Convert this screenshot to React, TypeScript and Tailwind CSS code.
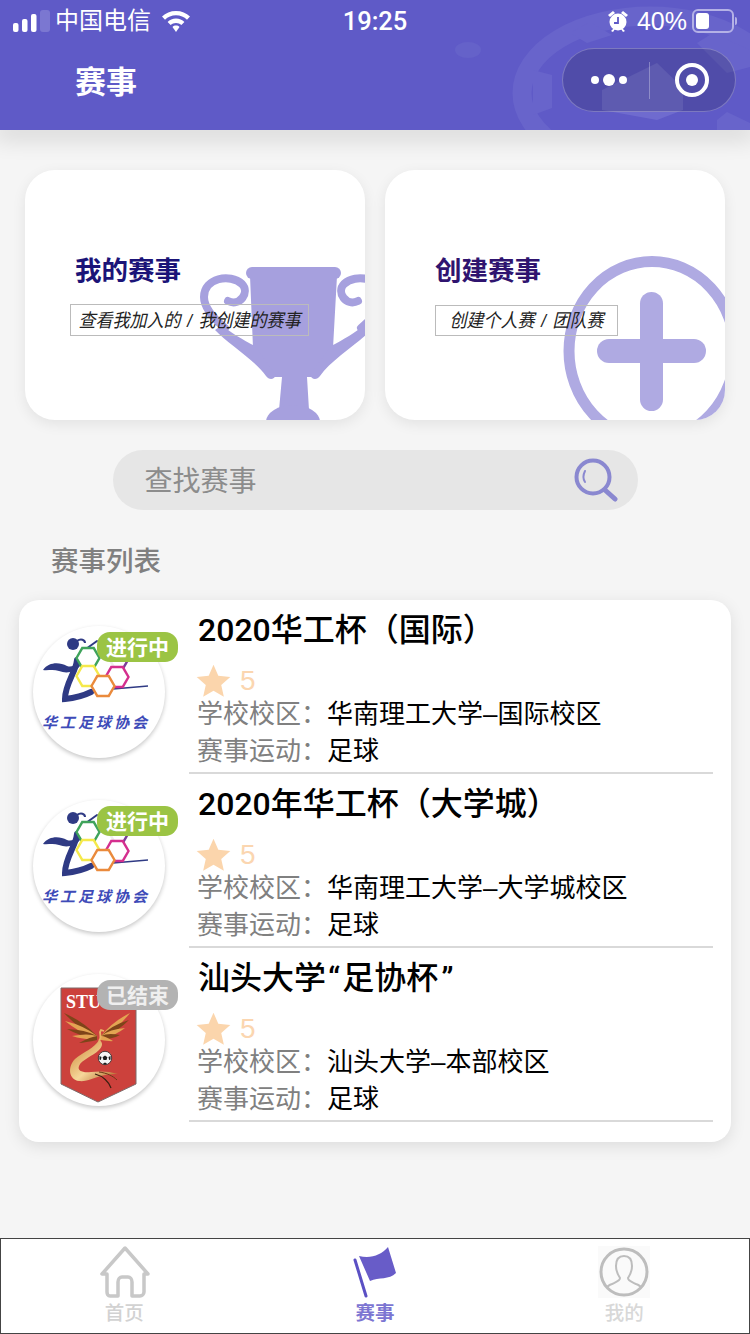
import * as React from 'react';

const BASE_FONT = "[font-family:'Liberation_Sans','Noto_Sans_CJK_SC',sans-serif]";

function HeaderWatermark() {
  const tone = '#6864CB';
  return (
    <svg className="absolute left-0 top-0" width="750" height="130" viewBox="0 0 750 130" fill="none">
      <ellipse cx="468" cy="50" rx="13" ry="8" fill="#6562C9" />
      <ellipse cx="650" cy="93" rx="128" ry="77" stroke={ tone } strokeWidth="19" />
      <path d="M533 70L552 75V108L533 115Z" fill={ tone } />
      <path d="M570 33L587 43L612 35L590 22Z" fill={ tone } />
      <path d="M697 43L713 33L750 50V67L727 73Z" fill={ tone } />
      <path d="M717 120L727 112L750 123V130H717Z" fill={ tone } />
      <path d="M602 90L657 63L683 88V110L657 120L602 110Z" fill="#6F6BCF" />
    </svg>
  );
}

function StatusBar() {
  return (
    <div className="relative grid h-[42px] grid-cols-3 items-center px-[13px] text-[24px] leading-none text-white">
      <div className="flex items-center">
        <svg width="38" height="24" viewBox="0 0 38 24" fill="#fff">
          <rect x="0" y="14" width="5.5" height="9" rx="2" />
          <rect x="9" y="10" width="5.5" height="13" rx="2" />
          <rect x="18" y="5" width="5.5" height="18" rx="2" />
          <rect x="27" y="1" width="10" height="22" rx="3" opacity="0.18" />
        </svg>
        <span className="ml-[4px]">中国电信</span>
        <svg className="ml-[10px]" width="30" height="24" viewBox="0 0 30 24" fill="#fff">
          <path d="M15 2C9.500 2 4.600 4 1 7.600l3 3.200C6.800 8 10.700 6.300 15 6.300s8.200 1.700 11 4.500l3-3.200C25.400 4 20.500 2 15 2z" />
          <path d="M15 9.500c-3.300 0-6.300 1.300-8.400 3.400l3 3.200c1.400-1.400 3.300-2.200 5.400-2.200s4 .8 5.400 2.200l3-3.200c-2.100-2.100-5.100-3.400-8.400-3.400z" />
          <path d="M15 16.500c-1.400 0-2.600.5-3.500 1.400L15 23l3.500-5.100c-.9-.9-2.100-1.400-3.500-1.400z" />
        </svg>
      </div>
      <div className="pt-[1px] text-center text-[25.500px] font-medium [font-family:Roboto,sans-serif]">19:25</div>
      <div className="flex items-center justify-end">
        <svg width="22" height="24" viewBox="0 0 22 24" fill="#fff">
          <circle cx="11" cy="13" r="8.500" />
          <path d="M1 6l5-4 2 2-5 4zM21 6l-5-4-2 2 5 4zM4 22l3-3 1 1-2 3zM18 22l-3-3-1 1 2 3z" />
          <path d="M11 8v6h-4" stroke="#5F5AC7" strokeWidth="1.800" fill="none" />
        </svg>
        <span className="ml-[8px] text-[25px]">40%</span>
        <div className="relative ml-[5px] mr-[3px] h-[24px] w-[42px] rounded-[6px] border-2 border-[#B4B1E6] p-[2px]">
          <div className="h-full w-[13px] rounded-[3px] bg-white" />
          <div className="absolute -right-[5px] top-[6px] h-[8px] w-[2px] rounded-r bg-[#B4B1E6]" />
        </div>
      </div>
    </div>
  );
}

function Capsule() {
  return (
    <div className="relative flex h-[64px] w-[174px] items-center rounded-[32px] border border-white/25 bg-black/15">
      <div className="flex w-[64px] items-center justify-end gap-[4px]">
        <span className="h-[8px] w-[8px] rounded-full bg-white" />
        <span className="h-[12px] w-[12px] rounded-full bg-white" />
        <span className="h-[8px] w-[8px] rounded-full bg-white" />
      </div>
      <div className="ml-[22px] h-[37px] w-px bg-white/30" />
      <div className="ml-[25px] flex h-[34px] w-[34px] items-center justify-center rounded-full border-[4px] border-white">
        <span className="h-[12px] w-[12px] rounded-full bg-white" />
      </div>
    </div>
  );
}

function TrophyArt() {
  const color = '#A6A0DE';
  return (
    <svg className="absolute left-0 top-0" width="340" height="250" viewBox="0 0 340 250" fill="none">
      <rect x="221" y="97" width="95" height="12" rx="6" fill={ color } />
      <path d="M225 106H312L308 178L290 207H282L284 240H254L257 207H247L228 178Z" fill={ color } />
      <ellipse cx="268" cy="252" rx="27" ry="17" fill={ color } />
      <path d="M200 158C188 148 179 138 179 127C179 108 205 103 217 114C225 122 215 137 203 131" stroke={ color } strokeWidth="8" strokeLinecap="round" />
      <path d="M336 158C348 148 357 138 357 127C357 108 331 103 319 114C311 122 321 137 333 131" stroke={ color } strokeWidth="8" strokeLinecap="round" />
      <path d="M190 160C203 174 230 190 241 206C244 210 249 210 251 205L230 176C218 170 205 162 197 155Z" fill={ color } />
      <path d="M346 160C333 174 306 190 295 206C292 210 287 210 285 205L306 176C318 170 331 162 339 155Z" fill={ color } />
    </svg>
  );
}

function PlusArt() {
  const color = '#AFAAE2';
  return (
    <svg className="absolute left-0 top-0" width="340" height="250" viewBox="0 0 340 250" fill="none">
      <ellipse cx="267" cy="181" rx="83" ry="89.500" stroke={ color } strokeWidth="11" />
      <rect x="255" y="122" width="23" height="119" rx="11.500" fill={ color } />
      <rect x="212" y="169" width="109" height="24" rx="12" fill={ color } />
    </svg>
  );
}

interface EntryCardProps {
  readonly title: string;
  readonly titleColor: string;
  readonly subtitle: string;
  readonly boxClass: string;
  readonly art: React.ReactNode;
}

function EntryCard({ title, titleColor, subtitle, boxClass, art }: EntryCardProps) {
  return (
    <div className="relative h-[250px] w-[340px] overflow-hidden rounded-[30px] bg-white shadow-[0_4px_14px_rgba(0,0,0,0.08)]">
      { art }
      <div className="relative flex flex-col pt-[85px]">
        <div className="pl-[50px] text-[26.500px] font-bold leading-[32px]" style={{ color: titleColor }}>{ title }</div>
        <div className={ boxClass }>
          <span className="scale-y-[1.1] whitespace-pre [word-spacing:2px]">{ subtitle }</span>
        </div>
      </div>
    </div>
  );
}

function SearchBar() {
  return (
    <div className="mx-auto mt-[30px] flex h-[60px] w-[525px] items-center justify-between rounded-[30px] bg-[#E6E6E6] pl-[32px] pr-[20px]">
      <span className="pt-[3px] text-[28px] text-[#8C8C8C]">查找赛事</span>
      <svg width="44" height="44" viewBox="0 0 44 44" fill="none" stroke="#8A88D0">
        <circle cx="19" cy="19" r="16.500" strokeWidth="4" />
        <path d="M31 32l10 9" strokeWidth="5" strokeLinecap="round" />
        <path d="M11 13c-2 4-2 8 0 11" strokeWidth="2" strokeLinecap="round" />
      </svg>
    </div>
  );
}

function HustLogo() {
  const hex = (cx: number, cy: number, stroke: string) => {
    const r = 11.500;
    const h = r * 0.866;
    return (
      <polygon
        points={ `${ cx - r },${ cy } ${ cx - r / 2 },${ cy - h } ${ cx + r / 2 },${ cy - h } ${ cx + r },${ cy } ${ cx + r / 2 },${ cy + h } ${ cx - r / 2 },${ cy + h }` }
        fill="#fff"
        stroke={ stroke }
        strokeWidth="2.400"
      />
    );
  };
  return (
    <svg width="132" height="132" viewBox="0 0 132 132" fill="none">
      <path d="M10 44C16 36 26 36 34 40C40 42 44 38 47 32L47 40C42 46 34 48 26 45C20 43 14 45 10 44Z" fill="#2F3A84" />
      <path d="M44 34C43 46 32 58 32 73C42 72 50 70 58 66" stroke="#2F3A84" strokeWidth="6" strokeLinecap="round" />
      <path d="M46 28L64 15" stroke="#2F3A84" strokeWidth="2" strokeLinecap="round" />
      <path d="M80 63C92 62 104 61 115 60" stroke="#2F3A84" strokeWidth="1.500" />
      <circle cx="40" cy="18" r="6" fill="#2F3A84" />
      <path d="M44 15c4-3 8-1 8 2" stroke="#2F3A84" strokeWidth="2" />
      { hex(84, 33, '#7A3F98') }
      { hex(70, 42, '#EEEEEE') }
      { hex(55, 32, '#3FA35B') }
      { hex(55, 50, '#F5E94A') }
      { hex(84, 51, '#D42F8E') }
      { hex(70, 60, '#EA8A3C') }
      <text x="9" y="102" fontSize="15" fontWeight="700" fontStyle="italic" fill="#3E4BB8" letterSpacing="3">华工足球协会</text>
    </svg>
  );
}

function feather(originX: number, originY: number, tipX: number, tipY: number, bend: number) {
  const midX = (originX + tipX) / 2;
  const midY = (originY + tipY) / 2;
  return `M${ originX } ${ originY }Q${ midX + bend } ${ midY - 3 } ${ tipX } ${ tipY }Q${ midX - bend } ${ midY + 3 } ${ originX } ${ originY + 4 }Z`;
}

const LEFT_TIPS = [[31, 39], [32, 47], [34, 55], [39, 62], [46, 69]];
const RIGHT_TIPS = [[97, 39], [96, 46], [92, 54], [87, 61], [80, 67]];

function StuLogo() {
  return (
    <svg width="132" height="132" viewBox="0 0 132 132" fill="none">
      <defs>
        <linearGradient id="stu-body" x1="0" y1="0" x2="1" y2="1">
          <stop offset="0" stopColor="#C9802F" />
          <stop offset="0.55" stopColor="#F6D79A" />
          <stop offset="1" stopColor="#A9581C" />
        </linearGradient>
      </defs>
      <path d="M28 14H103V110L65 128L28 110Z" fill="#CC413C" stroke="#7D6A6A" strokeWidth="1" />
      <text x="33" y="34" fontSize="18" fontWeight="700" fill="#fff" className="[font-family:'Liberation_Serif',serif]">STU</text>
      { LEFT_TIPS.map(([x, y], index) => (
        <path key={ index } d={ feather(64, 62, x, y, 3) } fill={ index % 2 ? '#E3A452' : '#7E4419' } />
      )) }
      { RIGHT_TIPS.map(([x, y], index) => (
        <path key={ index } d={ feather(68, 62, x, y, -3) } fill={ index % 2 ? '#7E4419' : '#E3A452' } />
      )) }
      <path d="M66 67C70 63 65 59 68 56L71 57" stroke="#E9B566" strokeWidth="1.800" />
      <path d="M66 66C62 74 50 78 42 85C34 93 36 106 46 107C54 108 62 103 72 101C78 100 82 100 85 100C76 97 66 97 58 98C50 99 44 97 46 92C48 86 60 82 66 76C70 72 70 68 66 66Z" fill="url(#stu-body)" />
      <path d="M62 100C70 102 76 108 78 114" stroke="#3A1F10" strokeWidth="1.200" />
      <path d="M66 98C74 99 80 102 84 106" stroke="#6B3A16" strokeWidth="1" />
      <circle cx="72" cy="84" r="6.700" fill="#F4F4F4" stroke="#222" strokeWidth="0.800" />
      <path d="M72 81.500l2.400 1.700-.9 2.800h-3l-.9-2.800zM66.500 82l2 1-.6 3-1.500-.5zM77.500 82l-2 1 .6 3 1.500-.5zM70 89.500l2-1 2 1-2 1.200z" fill="#1C1C1C" />
    </svg>
  );
}

interface MatchRowProps {
  readonly title: React.ReactNode;
  readonly status: string;
  readonly statusClass: string;
  readonly school: string;
  readonly logo: React.ReactNode;
}

function MatchRow({ title, status, statusClass, school, logo }: MatchRowProps) {
  return (
    <div className="flex h-[174px] pl-[14px] pr-[18px]">
      <div className="relative mr-[24px] mt-[26px] h-[132px] w-[132px] shrink-0 rounded-full bg-white shadow-[0_2px_4px_rgba(0,0,0,0.22)]">
        { logo }
        <div className={ `absolute left-[64px] top-[6px] flex h-[30px] w-[81px] items-center justify-center rounded-[13px] text-[21px] font-bold leading-none ${ statusClass }` }>{ status }</div>
      </div>
      <div className="flex min-w-0 flex-1 flex-col border-b-2 border-[#D9D9D9] pl-[8px]">
        <div className="h-[60px] pl-[1px] text-[32px] font-medium leading-[60px] text-black [font-family:Roboto,'Noto_Sans_CJK_SC',sans-serif]">{ title }</div>
        <div className="flex h-[36px] items-center pt-[6px]">
          <svg width="35" height="36" viewBox="0 0 24 24" fill="#FBD5AC" className="-ml-[1px]">
            <path d="M12 .8l3.300 7.600 8.200.9-6.200 5.500 1.800 8L12 18.700l-7.100 4.100 1.800-8L.5 9.300l8.200-.9z" />
          </svg>
          <span className="ml-[9px] text-[28px] leading-none text-[#FBD6B0]">5</span>
        </div>
        <div className="flex h-[37px] items-center text-[26px]">
          <span className="w-[130px] text-[#808080]">学校校区：</span>
          <span className="text-black">{ school }</span>
        </div>
        <div className="flex h-[37px] items-center text-[26px]">
          <span className="w-[130px] text-[#808080]">赛事运动：</span>
          <span className="text-black">足球</span>
        </div>
      </div>
    </div>
  );
}

function TabBar() {
  return (
    <div className="mt-auto grid h-[96px] grid-cols-3 border border-[#444] bg-white text-[19.500px] leading-none">
      <div className="flex flex-col items-center pt-[7px]">
        <svg width="52" height="52" viewBox="0 0 52 52" fill="none" stroke="#C8C8C8" strokeWidth="3.500" strokeLinejoin="round" className="-ml-[2px]">
          <path d="M26 2L3 28H8V46C8 48 9 50 11 50H19V36C19 33 21 31 23 31H29C31 31 33 33 33 36V50H41C43 50 45 48 45 46V28H49Z" />
        </svg>
        <span className="-ml-[3px] mt-[6px] font-medium text-[#D2D2D2]">首页</span>
      </div>
      <div className="flex flex-col items-center pt-[7px]">
        <svg width="52" height="52" viewBox="0 0 52 52">
          <path d="M6 14L17 50" stroke="#5B50C4" strokeWidth="3" strokeLinecap="round" />
          <path d="M10 10C22 13 32 9 39 1L47 27C40 34 30 31 21 35Z" fill="#685CC8" />
        </svg>
        <span className="mt-[6px] font-bold text-[#7C75D2]">赛事</span>
      </div>
      <div className="flex flex-col items-center pt-[7px]">
        <svg width="52" height="52" viewBox="0 0 52 52" fill="none" stroke="#BDBDBD" className="bg-[#FAFAFA]">
          <circle cx="26" cy="26" r="23" strokeWidth="3" />
          <path d="M26 10C20 10 18 15 18 20C18 25 20 29 22 32C22 35 18 36 14 38C11 39 9 41 9 42M26 10C32 10 34 15 34 20C34 25 32 29 30 32C30 35 34 36 38 38C41 39 43 41 43 42" strokeWidth="2" />
        </svg>
        <span className="mt-[6px] font-medium text-[#D8D8D8]">我的</span>
      </div>
    </div>
  );
}

export default function App() {
  return (
    <div className={ `flex h-[1334px] w-[750px] flex-col overflow-hidden bg-[#F5F5F5] ${ BASE_FONT }` }>
      <header className="relative z-10 h-[130px] shrink-0 overflow-hidden bg-[#5F5AC7]">
        <HeaderWatermark />
        <StatusBar />
        <div className="relative flex items-center justify-between pl-[75px] pr-[14px] pt-[6px]">
          <div className="pt-[6px] text-[31px] font-bold text-white">赛事</div>
          <Capsule />
        </div>
      </header>
      <div className="relative z-[5] h-0 shadow-[0_0_24px_6px_rgba(0,0,0,0.2)]" />

      <div className="flex justify-between px-[25px] pt-[40px]">
        <EntryCard
          title="我的赛事"
          titleColor="#1B1478"
          subtitle="查看我加入的 / 我创建的赛事"
          boxClass="ml-[45px] mt-[17px] flex h-[32px] w-[239px] items-center justify-center border border-[#BBB] text-[17px] italic leading-none text-[#222]"
          art={ <TrophyArt /> }
        />
        <EntryCard
          title="创建赛事"
          titleColor="#2F146F"
          subtitle="创建个人赛 / 团队赛"
          boxClass="ml-[50px] mt-[18px] flex h-[31px] w-[183px] items-center justify-center border border-[#BBB] text-[17px] italic leading-none text-[#222]"
          art={ <PlusArt /> }
        />
      </div>

      <SearchBar />

      <div className="mt-[32px] h-[40px] pl-[51px] text-[27.500px] font-medium leading-[40px] text-[#808080]">赛事列表</div>

      <div className="mx-[19px] mt-[18px] rounded-[20px] bg-white pb-[20px] shadow-[0_4px_16px_rgba(0,0,0,0.1)]">
        <MatchRow title="2020华工杯（国际）" status="进行中" statusClass="bg-[#9BC444] text-white" school="华南理工大学–国际校区" logo={ <HustLogo /> } />
        <MatchRow title="2020年华工杯（大学城）" status="进行中" statusClass="bg-[#9BC444] text-white" school="华南理工大学–大学城校区" logo={ <HustLogo /> } />
        <MatchRow
          title={ <>汕头大学<span className="mx-[2px]">“</span>足协杯<span className="mx-[3px]">”</span></> }
          status="已结束"
          statusClass="bg-[#B3B3B3] text-[#EFEFEF]"
          school="汕头大学–本部校区"
          logo={ <StuLogo /> }
        />
      </div>

      <TabBar />
    </div>
  );
}
